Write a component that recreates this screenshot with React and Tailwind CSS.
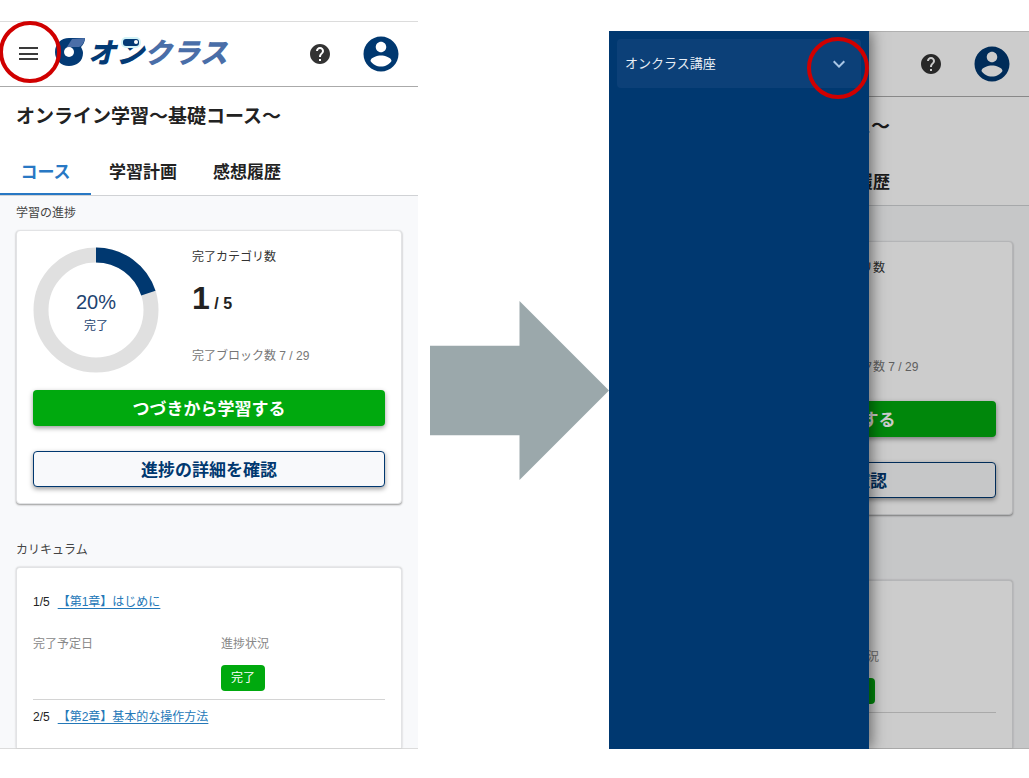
import React from 'react';
import { MdHelp, MdExpandMore } from 'react-icons/md';

const chapters = [
    { id: 1, number: '1/5', title: '【第1章】はじめに', status: '完了' },
    { id: 2, number: '2/5', title: '【第2章】基本的な操作方法' },
];

const Logo = () => (
    <svg width="178" height="34" viewBox="0 0 178 34" role="img" aria-label="オンクラス">
        <path d="M15 1H31C31 5 29 8 27 10C28 12 29 14 29 16C29 24 23 29 15 29C7 29 1 23 1 15C1 7 7 1 15 1Z" fill="#033a75" />
        <path d="M13 10L18 2L31 1C30 6 28 9 25 10Z" fill="#4a6ea8" />
        <circle cx="15" cy="15" r="5" fill="#fff" />
        <text
            x="34"
            y="26"
            fontSize="28"
            fontWeight="900"
            fontStyle="italic"
            fontFamily="'Liberation Sans', 'Noto Sans CJK JP', sans-serif"
            fill="#033a75"
        >
            オン<tspan fill="#4a6ea8">クラス</tspan>
        </text>
        <rect x="67" y="0" width="20" height="11" rx="5" fill="#d3f3f7" />
        <rect x="69" y="2" width="16" height="7" rx="3" fill="#033a75" />
        <circle cx="82" cy="5" r="2" fill="#fff" />
    </svg>
);

const AccountIcon = () => (
    <svg className="size-[42px] text-[#003870]" viewBox="0 0 24 24" fill="currentColor" aria-hidden="true">
        <path d="M12 2C6.48 2 2 6.48 2 12s4.48 10 10 10 10-4.48 10-10S17.52 2 12 2zm0 3c1.66 0 3 1.34 3 3s-1.34 3-3 3-3-1.34-3-3 1.34-3 3-3zm0 14.2c-2.5 0-4.71-1.28-6-3.22.03-1.99 4-3.08 6-3.08 1.99 0 5.97 1.09 6 3.08-1.29 1.94-3.5 3.22-6 3.22z" />
    </svg>
);

const Header = ({ showLogo }) => (
    <header className="flex h-[65px] items-center border-b border-[#aaa] bg-white px-4">
        <button type="button" aria-label="メニュー" className="size-6">
            <svg viewBox="0 0 24 24" className="size-6" stroke="#3a3a3a" strokeWidth="2">
                <path d="M3 6h19M3 12h19M3 17h19" />
            </svg>
        </button>
        {showLogo && (
            <a href="#top" className="ml-[14px] shrink-0">
                <Logo />
            </a>
        )}
        <div className="ml-auto flex items-center gap-7">
            <button type="button" aria-label="ヘルプ">
                <MdHelp className="size-6 text-[#333]" />
            </button>
            <button type="button" aria-label="アカウント">
                <AccountIcon />
            </button>
        </div>
    </header>
);

const ProgressRing = ({ percent }) => {
    const length = 2 * Math.PI * 55;

    return (
        <div className="relative size-[126px] shrink-0">
            <svg viewBox="0 0 126 126" className="size-full -rotate-90" fill="none" strokeWidth="15" aria-hidden="true">
                <circle cx="63" cy="63" r="55" stroke="#e0e0e0" />
                <circle cx="63" cy="63" r="55" stroke="#003870" strokeDasharray={`${(length * percent) / 100} ${length}`} />
            </svg>
            <div className="absolute inset-0 flex flex-col items-center justify-center pt-2 text-[#1d4370]">
                <span className="text-xl leading-6">{percent}%</span>
                <span className="text-xs leading-6">完了</span>
            </div>
        </div>
    );
};

const ProgressCard = () => (
    <div className="rounded border border-[#e2e3e5] bg-white p-4 shadow-[0_1px_2px_#999]">
        <div className="flex gap-[33px]">
            <ProgressRing percent={20} />
            <div className="pt-px text-xs whitespace-nowrap">
                <p className="leading-[18px] text-[#333]">完了カテゴリ数</p>
                <p className="mt-[14px] text-base leading-9 font-bold text-[#222]">
                    <span className="text-[32px]">1</span> / 5
                </p>
                <p className="mt-[25px] leading-[18px] text-[#777]">完了ブロック数 7 / 29</p>
            </div>
        </div>
        <button
            type="button"
            className="mt-[17px] flex h-9 w-full items-center justify-center rounded bg-[#00a90e] pt-1 text-[17px] font-bold text-white shadow-[0_2px_5px_#0006]"
        >
            つづきから学習する
        </button>
        <button
            type="button"
            className="mt-[25px] flex h-9 w-full items-center justify-center rounded border border-[#003870] bg-[#f8f9fb] pt-1 text-[17px] font-bold text-[#003870] shadow-[0_2px_5px_#0006]"
        >
            進捗の詳細を確認
        </button>
    </div>
);

const Chapter = ({ chapter }) => (
    <li>
        <div className="flex gap-2 text-xs leading-[18px] whitespace-nowrap">
            <span className="text-[#222]">{chapter.number}</span>
            <a href={`#chapter-${chapter.id}`} className="text-[#2478b8] underline underline-offset-2">
                {chapter.title}
            </a>
        </div>
        {chapter.status && (
            <div className="mt-6 mb-2 grid grid-cols-2 gap-6 border-b border-[#d4d4d4] pb-2 text-xs leading-[18px] text-[#888]">
                <p>完了予定日</p>
                <div>
                    <p>進捗状況</p>
                    <span className="mt-3 inline-flex h-[26px] items-center rounded bg-[#00a90e] px-[10px] text-white">
                        {chapter.status}
                    </span>
                </div>
            </div>
        )}
    </li>
);

const CoursePage = ({ drawerOpen }) => (
    <div className="border-y border-[#dcdcdc] bg-[#f8f9fb]">
        <Header showLogo={!drawerOpen} />
        <div className="bg-white">
            <h1 className="flex h-[61px] items-center px-4 text-[19px] font-bold whitespace-nowrap text-[#222]">
                オンライン学習〜基礎コース〜
            </h1>
            <nav className="flex h-12 border-b border-[#d0d2d5] text-[17px] font-bold whitespace-nowrap text-[#222]">
                <button type="button" className="min-w-[91px] border-b-2 border-[#2878c4] px-[18px] pt-1 text-[#2878c4]">
                    コース
                </button>
                <button type="button" className="px-[18px] pt-0.5">学習計画</button>
                <button type="button" className="px-[18px] pt-0.5">感想履歴</button>
            </nav>
        </div>
        <main className={`px-4 ${drawerOpen ? 'pt-[10px]' : 'pt-[9px]'}`}>
            <h2 className="mb-[9px] text-xs leading-4 text-[#444]">学習の進捗</h2>
            <ProgressCard />
            <h2 className={`mb-[9px] text-xs leading-4 text-[#444] ${drawerOpen ? 'mt-10' : 'mt-[38px]'}`}>カリキュラム</h2>
            <ul className={`rounded-t border border-b-0 border-[#e2e3e5] bg-white px-4 pt-[25px] shadow-[0_0_2px_#bbb] ${drawerOpen ? 'pb-[9px]' : 'pb-[22px]'}`}>
                {chapters.map((chapter) => (
                    <Chapter key={chapter.id} chapter={chapter} />
                ))}
            </ul>
        </main>
    </div>
);

const Drawer = () => (
    <aside className="absolute inset-y-0 left-0 w-[62%] bg-[#003870] p-2 shadow-[2px_0_14px_#0008]">
        <div className="relative">
            <button
                type="button"
                className="flex h-[49px] w-full items-center justify-between rounded bg-[#0c4078] pr-[10px] pl-2 text-[13px] text-[#e8eef5]"
            >
                オンクラス講座
                <MdExpandMore className="size-6 text-[#a9c6e6]" />
            </button>
            <span className="pointer-events-none absolute -top-0.5 -right-2 size-[62px] rounded-full border-4 border-[#d00000]" />
        </div>
    </aside>
);

const App = () => {
    return (
        <div className="grid grid-cols-[418fr_191fr_420fr] items-start overflow-hidden bg-white font-['Liberation_Sans','Noto_Sans_CJK_JP',sans-serif]">
            <section className="relative min-w-0 pt-[21px]">
                <CoursePage />
                <span className="pointer-events-none absolute top-[21px] -left-px size-[62px] rounded-full border-4 border-[#d00000]" />
            </section>
            <div className="pt-[301px] pl-3">
                <svg viewBox="0 0 178 178" className="w-full" fill="#9ba8ab" aria-hidden="true">
                    <path d="M0 44.5H89V0L178 89L89 178V133.5H0Z" />
                </svg>
            </div>
            <section className="min-w-0 pt-[31px]">
                <div className="relative overflow-hidden">
                    <CoursePage drawerOpen />
                    <div className="absolute inset-0 bg-black/20" />
                    <Drawer />
                </div>
            </section>
        </div>
    );
};

export default App;
